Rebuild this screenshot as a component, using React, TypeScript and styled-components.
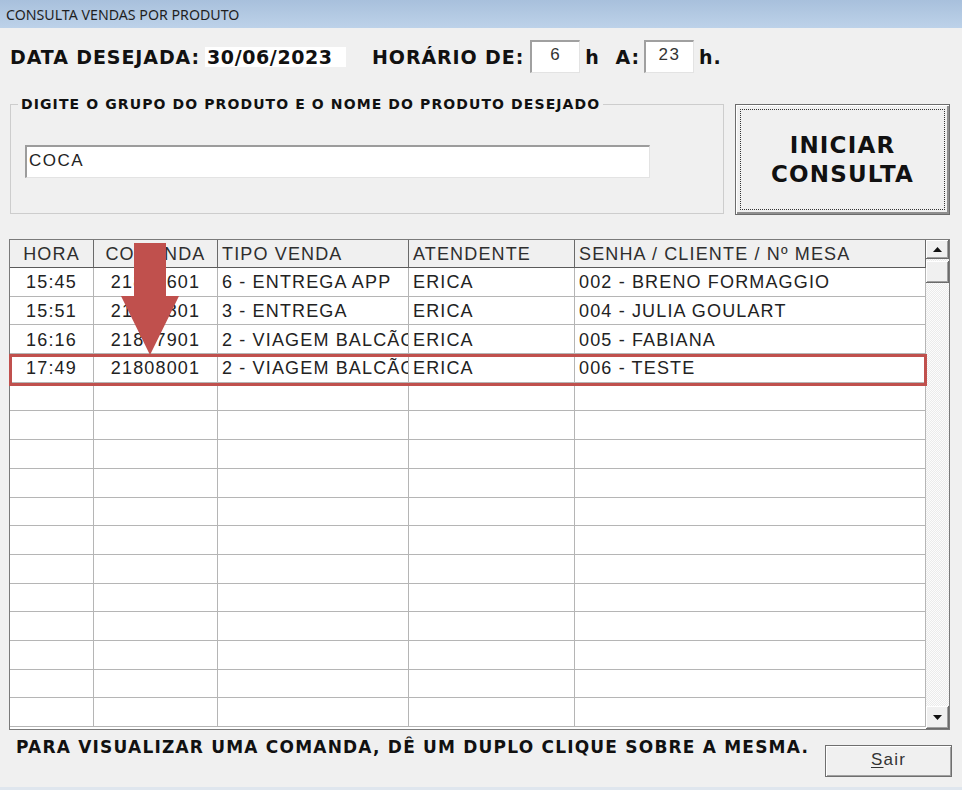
import React from "react";
import styled, { createGlobalStyle } from "styled-components";

const GlobalStyle = createGlobalStyle`
  html, body {
    margin: 0;
    padding: 0;
    background: #f0f0f0;
  }
  body {
    font-family: "Liberation Sans", Arial, sans-serif;
  }
`;

type Align = "left" | "center";

const columns: { title: string; width: number; align: Align }[] = [
  { title: "HORA", width: 84, align: "center" },
  { title: "COMANDA", width: 124, align: "center" },
  { title: "TIPO VENDA", width: 191, align: "left" },
  { title: "ATENDENTE", width: 166, align: "left" },
  { title: "SENHA / CLIENTE / Nº MESA", width: 351, align: "left" },
];

const rows = [
  ["15:45", "21807601", "6 - ENTREGA APP", "ERICA", "002 - BRENO FORMAGGIO"],
  ["15:51", "21807801", "3 - ENTREGA", "ERICA", "004 - JULIA GOULART"],
  ["16:16", "21807901", "2 - VIAGEM BALCÃO", "ERICA", "005 - FABIANA"],
  ["17:49", "21808001", "2 - VIAGEM BALCÃO", "ERICA", "006 - TESTE"],
];

const EMPTY_ROWS = 12;
const gridTemplate = columns.map((c) => `${c.width}px`).join(" ");

const Window = styled.div`
  width: 962px;
  height: 790px;
  background: #f0f0f0;
  display: flex;
  flex-direction: column;
  overflow: hidden;
  box-sizing: border-box;
  border-bottom: 3px solid #dfe6ee;
`;

const TitleBar = styled.div`
  height: 28px;
  flex: none;
  display: flex;
  align-items: center;
  padding-left: 6px;
  background: linear-gradient(#a8c0dc, #bdd2e9);
  font-family: "Noto Sans", "Open Sans", sans-serif;
  font-size: 14.2px;
  color: #1f1f1f;
`;

const FieldsRow = styled.div`
  display: flex;
  align-items: center;
  height: 33px;
  margin-top: 12px;
  padding-left: 10px;
`;

const BoldLabel = styled.span<{ $gap?: number }>`
  font-family: "DejaVu Sans", Verdana, sans-serif;
  font-weight: bold;
  font-size: 19px;
  letter-spacing: 0.9px;
  color: #111;
  margin-left: ${(p) => p.$gap ?? 0}px;
  white-space: nowrap;
`;

const DateValue = styled(BoldLabel)`
  background: #fff;
  height: 20px;
  line-height: 21px;
  width: 139px;
  padding-left: 2px;
  letter-spacing: 0.6px;
`;

const HourBox = styled.div<{ $gap: number }>`
  width: 50px;
  height: 33px;
  box-sizing: border-box;
  margin-left: ${(p) => p.$gap}px;
  background: #fff;
  border-top: 2px solid #a0a0a0;
  border-left: 2px solid #a0a0a0;
  border-right: 1px solid #e3e3e3;
  border-bottom: 1px solid #e3e3e3;
  display: flex;
  align-items: center;
  justify-content: center;
  padding-bottom: 4px;
  font-size: 17px;
  letter-spacing: 1.5px;
  color: #333;
`;

const GroupRow = styled.div`
  display: flex;
  align-items: flex-start;
  margin-top: 23px;
  padding-left: 10px;
`;

const GroupBox = styled.fieldset`
  margin: 0;
  padding: 0;
  width: 714px;
  height: 118px;
  box-sizing: border-box;
  border: 1px solid #cdcdcd;
  min-width: 0;
`;

const GroupLegend = styled.legend`
  margin-left: 7px;
  padding: 0 3px;
  line-height: 16px;
  font-family: "DejaVu Sans", Verdana, sans-serif;
  font-weight: bold;
  font-size: 14px;
  letter-spacing: 1.1px;
  color: #111;
`;

const ProductInput = styled.input`
  display: block;
  margin: 33px 0 0 14px;
  width: 625px;
  height: 33px;
  box-sizing: border-box;
  background: #fff;
  border-top: 2px solid #9c9c9c;
  border-left: 2px solid #9c9c9c;
  border-right: 1px solid #e3e3e3;
  border-bottom: 1px solid #e3e3e3;
  padding: 0 0 3px 2px;
  font-family: "Liberation Sans", Arial, sans-serif;
  font-size: 17px;
  letter-spacing: 1.5px;
  color: #222;
  outline: none;
`;

const StartButton = styled.button`
  margin: 8px 0 0 11px;
  width: 215px;
  height: 111px;
  box-sizing: border-box;
  background: #f0f0f0;
  border: 1px solid #6c6c6c;
  box-shadow: inset 1px 1px 0 #ffffff, inset -2px -2px 0 #8f8f8f;
  padding: 4px;
  display: flex;
  cursor: default;
`;

const FocusRing = styled.span`
  flex: 1;
  border: 1px dotted #333;
  display: flex;
  align-items: center;
  justify-content: center;
  text-align: center;
  font-family: "DejaVu Sans", Verdana, sans-serif;
  font-weight: bold;
  font-size: 23px;
  line-height: 29px;
  letter-spacing: 1.2px;
  color: #111;
`;

const TableFrame = styled.div`
  position: relative;
  margin: 24px 0 0 9px;
  width: 941px;
  height: 491px;
  flex: none;
  box-sizing: border-box;
  border: 1px solid #7a7a7a;
  display: flex;
  background: #fff;
`;

const Grid = styled.div`
  width: 916px;
  overflow: hidden;
  display: grid;
  grid-template-columns: ${gridTemplate};
  grid-template-rows: 28px;
  grid-auto-rows: 28.7px;
  align-content: start;
`;

const HeadCell = styled.div<{ $align: Align }>`
  background: #f0f0f0;
  border-right: 1px solid #6a6a6a;
  border-bottom: 1px solid #5a5a5a;
  display: flex;
  align-items: center;
  justify-content: ${(p) => (p.$align === "center" ? "center" : "flex-start")};
  padding-left: ${(p) => (p.$align === "center" ? 0 : 4)}px;
  padding-top: 1px;
  font-size: 18px;
  letter-spacing: 1.15px;
  color: #2e2e2e;
  white-space: nowrap;
  overflow: hidden;
`;

const Cell = styled.div<{ $align: Align }>`
  border-right: 1px solid #b5b5b5;
  border-bottom: 1px solid #b5b5b5;
  display: flex;
  align-items: center;
  justify-content: ${(p) => (p.$align === "center" ? "center" : "flex-start")};
  padding-left: ${(p) => (p.$align === "center" ? 0 : 4)}px;
  padding-top: 2px;
  font-size: 18px;
  letter-spacing: 1.15px;
  color: #222;
  white-space: nowrap;
  overflow: hidden;
`;

const ScrollBar = styled.div`
  width: 23px;
  display: flex;
  flex-direction: column;
  background: repeating-conic-gradient(#ebebeb 0% 25%, #fcfcfc 0% 50%) 0 0 / 2px 2px;
`;

const ScrollPart = styled.div<{ $h: number }>`
  height: ${(p) => p.$h}px;
  flex: none;
  background: #f0f0f0;
  box-sizing: border-box;
  border-right: 1px solid #6b6b6b;
  border-bottom: 1px solid #6b6b6b;
  box-shadow: inset 1px 1px 0 #ffffff, inset -1px -1px 0 #a0a0a0;
  display: flex;
  align-items: center;
  justify-content: center;
`;

const Track = styled.div`
  flex: 1;
  display: flex;
  flex-direction: column;
  padding-top: 2px;
`;

const Highlight = styled.div`
  position: absolute;
  left: -1px;
  top: 114px;
  width: 918px;
  height: 32px;
  box-sizing: border-box;
  border: 3px solid #c0504d;
  pointer-events: none;
`;

const ArrowMark = styled.svg`
  position: absolute;
  left: 110px;
  top: 3px;
  pointer-events: none;
`;

const Footer = styled.div`
  display: flex;
  align-items: flex-start;
  padding: 0 10px 0 16px;
`;

const Hint = styled.span`
  margin-top: 7px;
  font-family: "DejaVu Sans", Verdana, sans-serif;
  font-weight: bold;
  font-size: 17px;
  letter-spacing: 1.2px;
  color: #111;
  white-space: nowrap;
`;

const ExitButton = styled.button`
  margin: 15px 0 0 auto;
  width: 127px;
  height: 32px;
  box-sizing: border-box;
  background: #f0f0f0;
  border: 1px solid #6f6f6f;
  box-shadow: inset 1px 1px 0 #ffffff, inset -1px -1px 0 #a0a0a0;
  font-family: "Liberation Sans", Arial, sans-serif;
  font-size: 17px;
  letter-spacing: 1.2px;
  color: #333;
  padding: 0 0 2px;
  cursor: default;

  u {
    text-underline-offset: 2px;
  }
`;

const Triangle = ({ up }: { up?: boolean }) => (
  <svg width="9" height="5" viewBox="0 0 9 5">
    <polygon points={up ? "0,5 9,5 4.5,0" : "0,0 9,0 4.5,5"} fill="#111" />
  </svg>
);

export default function App() {
  return (
    <>
      <GlobalStyle />
      <Window>
        <TitleBar>CONSULTA VENDAS POR PRODUTO</TitleBar>

        <FieldsRow>
          <BoldLabel>DATA DESEJADA:</BoldLabel>
          <DateValue $gap={5}>30/06/2023</DateValue>
          <BoldLabel $gap={26}>HORÁRIO DE:</BoldLabel>
          <HourBox $gap={6}>6</HourBox>
          <BoldLabel $gap={5}>h</BoldLabel>
          <BoldLabel $gap={16}>A:</BoldLabel>
          <HourBox $gap={4}>23</HourBox>
          <BoldLabel $gap={5}>h.</BoldLabel>
        </FieldsRow>

        <GroupRow>
          <GroupBox>
            <GroupLegend>DIGITE O GRUPO DO PRODUTO E O NOME DO PRODUTO DESEJADO</GroupLegend>
            <ProductInput readOnly value="COCA" />
          </GroupBox>
          <StartButton>
            <FocusRing>
              INICIAR
              <br />
              CONSULTA
            </FocusRing>
          </StartButton>
        </GroupRow>

        <TableFrame>
          <Grid>
            {columns.map((c) => (
              <HeadCell key={c.title} $align={c.align}>
                {c.title}
              </HeadCell>
            ))}
            {rows.map((r, i) =>
              r.map((v, j) => (
                <Cell key={`${i}-${j}`} $align={columns[j].align}>
                  {v}
                </Cell>
              ))
            )}
            {Array.from({ length: EMPTY_ROWS }).map((_, i) =>
              columns.map((c) => <Cell key={`e${i}-${c.title}`} $align={c.align} />)
            )}
          </Grid>
          <ScrollBar>
            <ScrollPart $h={19}>
              <Triangle up />
            </ScrollPart>
            <Track>
              <ScrollPart $h={22} />
            </Track>
            <ScrollPart $h={23}>
              <Triangle />
            </ScrollPart>
          </ScrollBar>

          <Highlight />
          <ArrowMark width="60" height="113" viewBox="0 0 60 113">
            <polygon points="14,0 46,0 46,53 59,53 30,112 1,53 14,53" fill="#c0504d" />
          </ArrowMark>
        </TableFrame>

        <Footer>
          <Hint>PARA VISUALIZAR UMA COMANDA, DÊ UM DUPLO CLIQUE SOBRE A MESMA.</Hint>
          <ExitButton>
            <u>S</u>air
          </ExitButton>
        </Footer>
      </Window>
    </>
  );
}
